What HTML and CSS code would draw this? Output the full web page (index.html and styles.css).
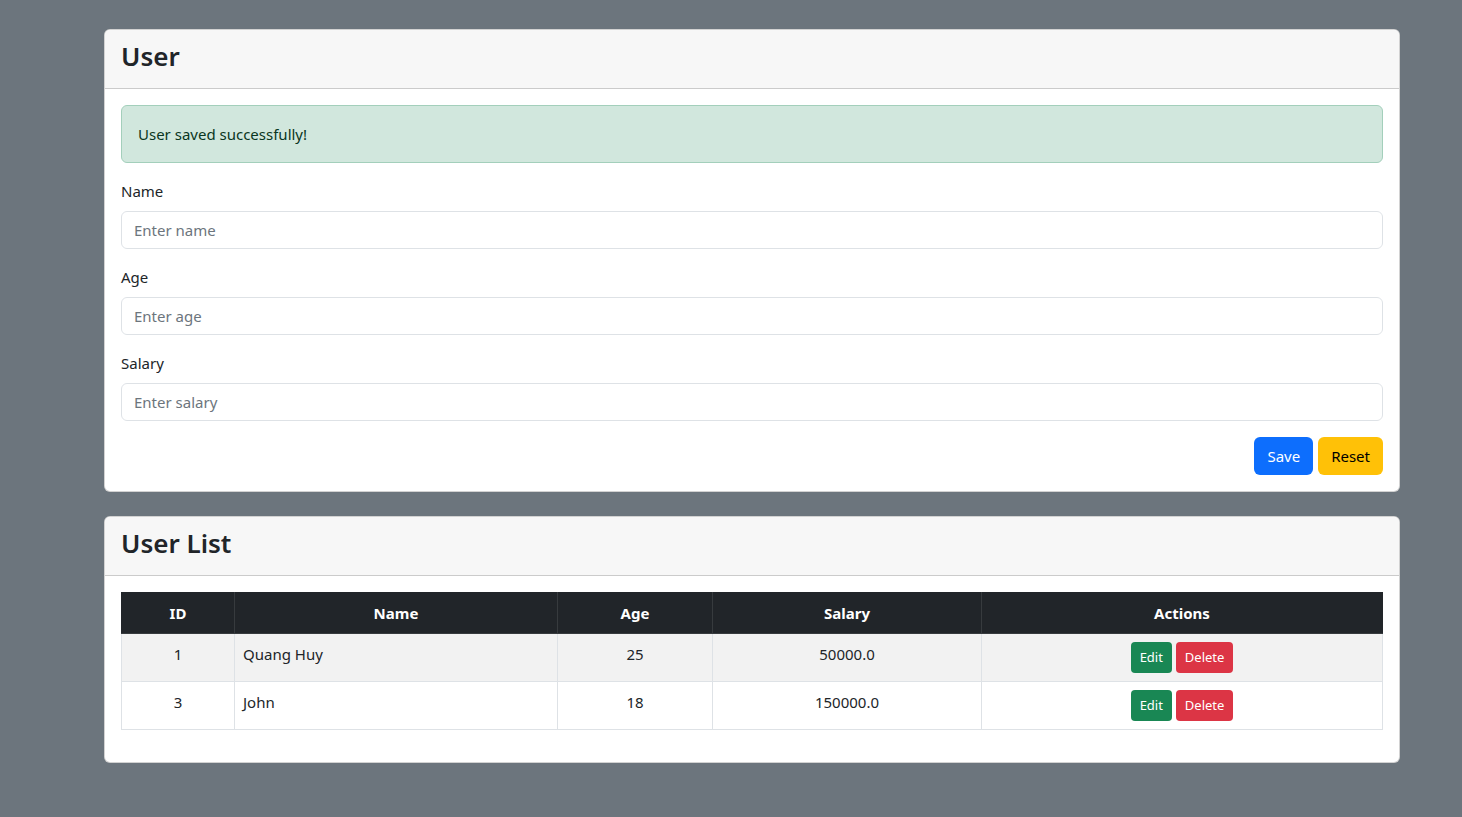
FILE: index.html
```html
<!DOCTYPE html>
<html>
<head>
<meta charset="utf-8">
<link rel="stylesheet" href="styles.css">
</head>
<body>
<div class="container">
  <div class="card">
    <div class="card-header"><h2>User</h2></div>
    <div class="card-body">
      <div class="alert">User saved successfully!</div>
      <div class="field">
        <label>Name</label>
        <input class="input" type="text" placeholder="Enter name">
      </div>
      <div class="field">
        <label>Age</label>
        <input class="input" type="text" placeholder="Enter age">
      </div>
      <div class="field">
        <label>Salary</label>
        <input class="input" type="text" placeholder="Enter salary">
      </div>
      <div class="actions">
        <button class="btn btn-primary">Save</button>
        <button class="btn btn-warning">Reset</button>
      </div>
    </div>
  </div>

  <div class="card card-list">
    <div class="card-header"><h2>User List</h2></div>
    <div class="card-body">
      <table class="table">
        <colgroup>
          <col class="c-id"><col class="c-name"><col class="c-age"><col class="c-salary"><col class="c-actions">
        </colgroup>
        <thead>
          <tr><th>ID</th><th>Name</th><th>Age</th><th>Salary</th><th>Actions</th></tr>
        </thead>
        <tbody>
          <tr class="odd">
            <td class="center">1</td><td>Quang Huy</td><td class="center">25</td><td class="center">50000.0</td>
            <td class="center"><button class="btn btn-sm btn-success">Edit</button> <button class="btn btn-sm btn-danger">Delete</button></td>
          </tr>
          <tr>
            <td class="center">3</td><td>John</td><td class="center">18</td><td class="center">150000.0</td>
            <td class="center"><button class="btn btn-sm btn-success">Edit</button> <button class="btn btn-sm btn-danger">Delete</button></td>
          </tr>
        </tbody>
      </table>
    </div>
  </div>
</div>
</body>
</html>
```
FILE: styles.css
```css
* { box-sizing: border-box; }
html, body { margin: 0; padding: 0; }
body {
  background: #6c757d;
  font-family: "Noto Sans", "Open Sans", sans-serif;
  font-size: 15px;
  line-height: 24px;
  color: #212529;
  min-height: 817px;
}
.container {
  width: 1296px;
  margin-left: 104px;
  padding-top: 29px;
  display: flex;
  flex-direction: column;
  gap: 24px;
}
.card {
  background: #fff;
  border: 1px solid rgba(0,0,0,0.175);
  border-radius: 6px;
  overflow: hidden;
}
.card-header {
  background: #f7f7f7;
  border-bottom: 1px solid rgba(0,0,0,0.175);
  height: 59px;
  padding: 8px 16px;
  display: flex;
  align-items: center;
}
.card-header h2 {
  margin: 0;
  font-size: 26px;
  font-weight: 600;
  line-height: 1.2;
  position: relative;
  top: -2px;
}
.card-body {
  padding: 16px;
}
.alert {
  background: #d1e7dd;
  border: 1px solid #a3cfbb;
  color: #0a3622;
  border-radius: 6px;
  padding: 16px;
  margin-bottom: 16px;
}
.field { margin-bottom: 16px; }
.field label {
  display: block;
  margin-bottom: 8px;
}
.input {
  display: block;
  width: 100%;
  height: 38px;
  padding: 6px 12px;
  font: inherit;
  color: #212529;
  border: 1px solid #dee2e6;
  border-radius: 6px;
  background: #fff;
}
.input::placeholder { color: #6c757d; }
.actions {
  display: flex;
  justify-content: flex-end;
  gap: 5px;
}
.btn {
  font: inherit;
  border: 1px solid transparent;
  border-radius: 6px;
  padding: 6px 12px;
  line-height: 24px;
  cursor: pointer;
}
.btn-primary { background: #0d6efd; color: #fff; }
.btn-warning { background: #ffc107; color: #000; }
.btn-sm {
  font-size: 13px;
  line-height: 21px;
  padding: 4px 8px;
  border-radius: 4px;
  vertical-align: middle;
}
.btn-success { background: #198754; color: #fff; }
.btn-danger { background: #dc3545; color: #fff; }
.table {
  width: 100%;
  border-collapse: collapse;
  table-layout: fixed;
  margin-bottom: 16px;
}
.c-id { width: 113px; }
.c-name { width: 323px; }
.c-age { width: 155px; }
.c-salary { width: 269px; }
.table th {
  background: #212529;
  color: #fff;
  font-weight: 700;
  text-align: center;
  padding: 8px;
  border: 1px solid #373b3e;
  border-top-color: #212529;
}
.table th:first-child { border-left-color: #212529; }
.table th:last-child { border-right-color: #212529; }
.table td {
  padding: 8px;
  border: 1px solid #dee2e6;
  vertical-align: top;
}
.table tr.odd td { background: #f2f2f2; }
.center { text-align: center; }
```
